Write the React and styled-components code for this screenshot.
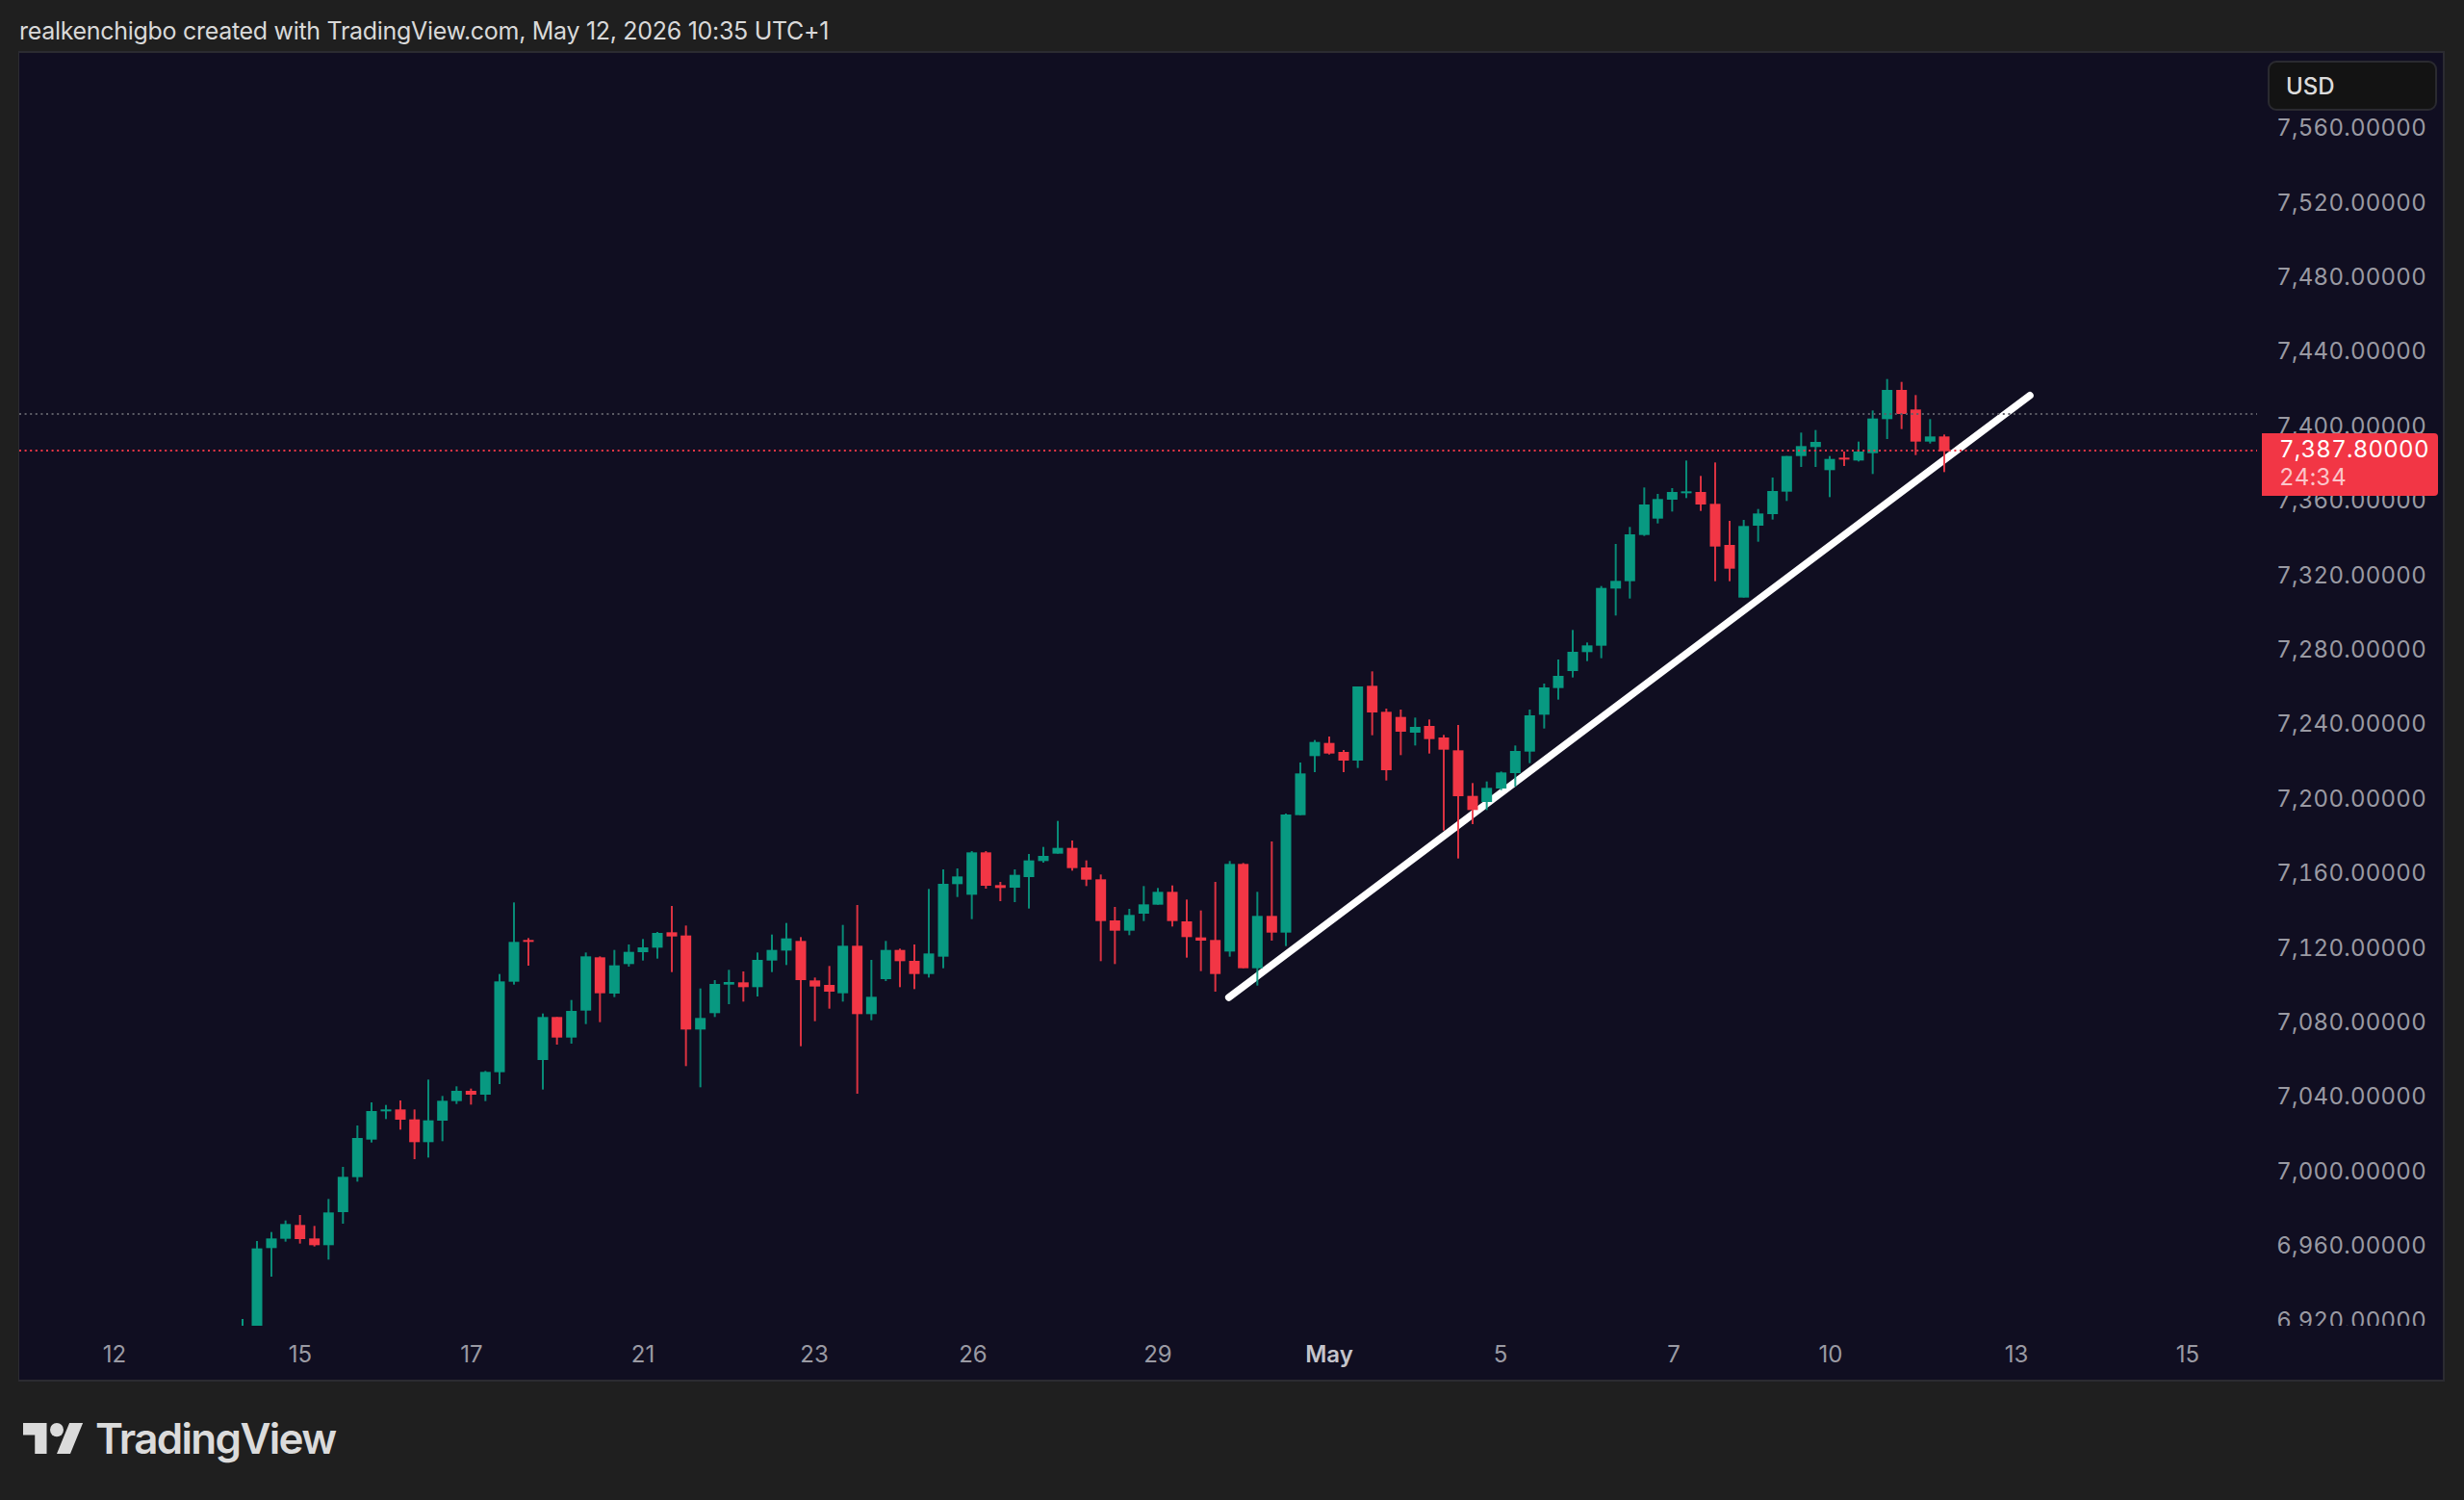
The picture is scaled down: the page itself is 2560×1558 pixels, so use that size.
import React from 'react';
import styled, { createGlobalStyle } from 'styled-components';

const GREEN = '#089981';
const RED = '#f23645';
const PLOT_LEFT = 20;
const PLOT_TOP = 55;
const PLOT_W = 2325;
const PLOT_H = 1322;

// Each group: crop origin plus candles measured as [x, colour, wickTop, bodyTop, bodyBottom, wickBottom]
const GROUPS = [
  { ox: 230, oy: 920, rows: [
    [111,'g',1107,1130,1372,1372],[156,'g',1079,1099,1129,1218],[200,'g',1043,1054,1100,1109],
    [245,'r',1026,1057,1101,1115],[290,'r',1060,1099,1120,1124],[334,'g',976,1018,1120,1165],
    [379,'g',876,907,1017,1053],[424,'g',747,786,908,922],[468,'g',675,702,791,800],
    [513,'g',683,697,701,727],[558,'r',669,697,729,760],[602,'r',697,728,799,852],
    [645,'g',604,731,799,847],[689,'g',655,670,732,796],[733,'g',625,639,671,680],
    [778,'r',632,639,651,682],[823,'g',577,580,651,671],[867,'g',275,298,581,618],
    [912,'g',52,175,299,308],[957,'r',163,169,173,249],[1002,'g',398,409,543,635],
    [1046,'r',409,409,473,495],[1091,'g',356,390,473,492],[1136,'g',208,220,389,431],
    [1180,'r',220,223,335,425],[1225,'g',200,248,336,347],
  ]},
  { ox: 640, oy: 840, rows: [
    [40,'g',423,446,484,492],[84,'g',406,432,447,473],[129,'g',384,387,433,467],
    [174,'r',303,385,398,509],[218,'r',364,395,688,802],[263,'g',560,652,688,868],
    [308,'g',534,546,637,649],[352,'g',502,540,548,609],[397,'r',507,541,556,601],
    [441,'g',448,471,556,585],[486,'g',392,440,473,509],[531,'g',356,404,442,487],
    [576,'r',400,412,534,740],[620,'r',526,535,554,662],[665,'r',490,549,570,623],
    [707,'g',362,427,575,601],[752,'r',300,427,640,888],[796,'g',471,586,640,659],
    [841,'g',412,440,531,537],[885,'r',436,440,475,556],[930,'r',423,474,515,562],
    [975,'g',250,451,515,526],[1020,'g',189,234,461,497],[1064,'g',186,211,235,275],
    [1109,'g',132,136,268,344],[1153,'r',132,136,240,249],[1198,'r',228,238,247,288],
    [1243,'g',189,206,246,291],
  ]},
  { ox: 1040, oy: 840, rows: [
    [87,'g',141,161,213,311],[132,'g',119,147,163,168],[177,'g',38,122,140,140],
    [222,'r',99,122,185,193],[266,'r',161,183,221,241],[311,'r',205,220,350,475],
    [355,'r',306,348,380,484],[400,'g',312,331,380,394],[445,'g',241,298,327,350],
    [489,'g',247,259,299,299],[534,'r',239,259,350,367],[579,'r',283,351,400,464],
    [623,'r',317,401,411,506],[668,'r',228,409,515,570],
  ]},
  { ox: 1260, oy: 680, rows: [
    [53,'g',643,652,925,941],[95,'r',649,652,977,977],[139,'g',739,814,977,1031],
    [184,'r',582,814,866,891],[228,'g',495,498,866,908],[273,'g',336,370,500,500],
    [318,'g',266,272,316,366],[363,'r',255,275,308,311],[408,'r',297,303,330,366],
    [452,'g',99,99,330,353],[497,'r',52,97,180,251],[541,'r',168,178,360,392],
    [586,'r',171,194,240,313],[631,'g',196,225,243,283],[675,'r',202,222,263,308],
    [720,'r',250,258,296,548],[765,'r',219,298,441,635],[810,'r',400,440,484,528],
    [854,'g',395,415,459,484],[899,'g',364,367,417,422],[943,'g',283,300,369,411],
    [988,'g',171,189,302,338],[1033,'g',90,102,187,230],[1077,'g',15,66,104,140],
  ]},
  { ox: 1540, oy: 600, rows: [
    [282,'g',163,231,291,311],[327,'g',202,211,232,260],[371,'g',26,32,212,251],
  ]},
  { ox: 1640, oy: 380, rows: [
    [116,'g',555,670,694,778],[160,'g',502,525,671,725],[205,'g',379,432,527,530],
    [247,'g',399,415,476,491],[292,'g',381,393,417,454],[336,'g',295,391,395,412],
    [381,'r',343,393,432,452],[426,'r',301,430,563,671],[471,'r',483,558,632,671],
    [515,'g',480,499,722,722],[560,'g',446,460,498,548],[605,'g',348,390,462,479],
    [649,'g',281,281,392,421],[694,'g',208,250,281,315],[739,'g',200,237,253,315],
    [783,'g',281,290,325,409],[828,'r',267,286,291,312],[873,'g',236,267,295,298],
    [917,'g',139,164,272,337],[962,'g',41,75,166,228],[1007,'r',50,75,150,197],
    [1051,'r',91,136,236,278],[1096,'g',166,220,236,242],[1140,'r',214,220,266,331],
  ]},
];

const CANDLES = GROUPS.flatMap(({ ox, oy, rows }) =>
  rows.map(([x, c, wt, bt, bb, wb]) => ({
    x: ox + x / 3 - PLOT_LEFT,
    color: c === 'g' ? GREEN : RED,
    wickTop: oy + wt / 3 - PLOT_TOP,
    bodyTop: oy + bt / 3 - PLOT_TOP,
    bodyBottom: oy + bb / 3 - PLOT_TOP,
    wickBottom: oy + wb / 3 - PLOT_TOP,
  })),
);

const PRICES = ['7,560','7,520','7,480','7,440','7,400','7,360','7,320','7,280','7,240','7,200','7,160','7,120','7,080','7,040','7,000','6,960','6,920'];

const TICKS = [
  ['12',119],['15',312],['17',490],['21',668],['23',846],['26',1011],['29',1203],
  ['May',1381,true],['5',1559],['7',1739],['10',1902],['13',2095],['15',2273],
];

const GlobalStyle = createGlobalStyle`
  html, body { margin: 0; padding: 0; background: #1f1f1f; }
  body { font-family: Inter, "Liberation Sans", sans-serif; }
`;

const Page = styled.div`
  width: 2560px;
  height: 1558px;
  background: #1f1f1f;
  display: flex;
  flex-direction: column;
  overflow: hidden;
`;

const Header = styled.header`
  height: 53px;
  flex: none;
  display: flex;
  align-items: center;
  padding: 11px 0 0 20px;
  box-sizing: border-box;
  color: #d9d9d9;
  font-size: 25px;
  letter-spacing: -0.3px;
`;

const Panel = styled.section`
  position: relative;
  flex: none;
  width: 2521px;
  height: 1382px;
  margin-left: 19px;
  box-sizing: border-box;
  border: 2px solid #2b2b31;
  border-left-width: 1px;
  background: #100e21;
  display: grid;
  grid-template-columns: 2325px 1fr;
  grid-template-rows: 1322px 1fr;
`;

const Plot = styled.svg`
  display: block;
  width: 2325px;
  height: 1322px;
`;

const PriceAxis = styled.div`
  display: flex;
  flex-direction: column;
  align-items: flex-end;
  height: 1322px;
  padding: 39.3px 17px 0 0;
  box-sizing: border-box;
  overflow: hidden;
`;

const PriceLabel = styled.div`
  flex: none;
  height: 77.4px;
  line-height: 77.4px;
  font-size: 24px;
  font-variant-numeric: tabular-nums;
  letter-spacing: 0.25px;
  color: #9a9aa3;
  white-space: nowrap;
`;

const TimeAxis = styled.div`
  grid-column: 1 / -1;
  display: flex;
  align-items: center;
  padding-top: 3px;
  box-sizing: border-box;
  font-size: 24px;
`;

const TimeTick = styled.span`
  flex: none;
  width: 0;
  display: flex;
  justify-content: center;
  white-space: nowrap;
  font-weight: ${(p) => (p.$strong ? 600 : 400)};
  color: ${(p) => (p.$strong ? '#c4c4cb' : '#9a9aa3')};
`;

const CurrencyButton = styled.div`
  position: absolute;
  top: 8px;
  right: 6px;
  width: 176px;
  height: 52px;
  box-sizing: border-box;
  padding-left: 17px;
  display: flex;
  align-items: center;
  background: #131313;
  border: 2px solid #2a2a30;
  border-radius: 9px;
  color: #dcdcdc;
  font-size: 24px;
  font-weight: 500;
`;

const PriceTag = styled.div`
  position: absolute;
  top: 395px;
  right: 5px;
  width: 183px;
  height: 65px;
  box-sizing: border-box;
  padding: 0 0 3px 18px;
  display: flex;
  flex-direction: column;
  justify-content: center;
  background: ${RED};
  border-radius: 0 4px 4px 0;
  font-size: 24px;
  line-height: 29px;
  font-variant-numeric: tabular-nums;
  letter-spacing: 0.25px;
  color: #fff;
`;

const Countdown = styled.span`
  color: rgba(255, 255, 255, 0.72);
`;

const Footer = styled.footer`
  flex: 1;
  display: flex;
  align-items: center;
  gap: 12px;
  padding: 0 0 5px 24px;
  box-sizing: border-box;
  color: #dbdbdb;
`;

const LogoMark = styled.svg`
  display: block;
  width: 63px;
  height: 32px;
  fill: currentColor;
`;

const Wordmark = styled.span`
  font-size: 44px;
  font-weight: 600;
  letter-spacing: -1.7px;
  font-family: Inter, sans-serif;
`;

function Candle({ x, color, wickTop, bodyTop, bodyBottom, wickBottom }) {
  return (
    <g fill={color}>
      <rect x={x - 1} y={wickTop} width={2} height={Math.max(0, wickBottom - wickTop)} opacity={0.9} />
      <rect x={x - 5.5} y={bodyTop} width={11} height={Math.max(2, bodyBottom - bodyTop)} />
    </g>
  );
}

export default function App() {
  return (
    <Page>
      <GlobalStyle />
      <Header>realkenchigbo created with TradingView.com, May 12, 2026 10:35 UTC+1</Header>
      <Panel>
        <Plot viewBox={`0 0 ${PLOT_W} ${PLOT_H}`}>
          <line
            x1={1276.7 - PLOT_LEFT}
            y1={1036 - PLOT_TOP}
            x2={2109 - PLOT_LEFT}
            y2={410.7 - PLOT_TOP}
            stroke="#fff"
            strokeWidth="7.5"
            strokeLinecap="round"
          />
          <rect x={232 - 1} y={1370 - PLOT_TOP} width="2" height="7" fill={GREEN} />
          {CANDLES.map((c) => (
            <Candle key={c.x} {...c} />
          ))}
          <line x1="0" y1={430 - PLOT_TOP} x2={PLOT_W} y2={430 - PLOT_TOP} stroke="#5d5d66" strokeWidth="2" strokeDasharray="2 3.6" />
          <line x1="0" y1={468 - PLOT_TOP} x2={PLOT_W} y2={468 - PLOT_TOP} stroke={RED} strokeWidth="2" strokeDasharray="2 3.6" />
        </Plot>
        <PriceAxis>
          {PRICES.map((p) => (
            <PriceLabel key={p}>{p}.00000</PriceLabel>
          ))}
        </PriceAxis>
        <TimeAxis>
          {TICKS.map(([label, center, strong], i) => (
            <TimeTick
              key={`${label}${center}`}
              $strong={strong}
              style={{ marginLeft: center - (i === 0 ? PLOT_LEFT : TICKS[i - 1][1]) }}
            >
              {label}
            </TimeTick>
          ))}
        </TimeAxis>
        <CurrencyButton>USD</CurrencyButton>
        <PriceTag>
          <span>7,387.80000</span>
          <Countdown>24:34</Countdown>
        </PriceTag>
      </Panel>
      <Footer>
        <LogoMark viewBox="0 4 36 18" preserveAspectRatio="none">
          <path d="M14 22H7V11H0V4h14v18zM28 22h-8l7.5-18h8L28 22z" />
          <circle cx="20" cy="8" r="4" />
        </LogoMark>
        <Wordmark>TradingView</Wordmark>
      </Footer>
    </Page>
  );
}
